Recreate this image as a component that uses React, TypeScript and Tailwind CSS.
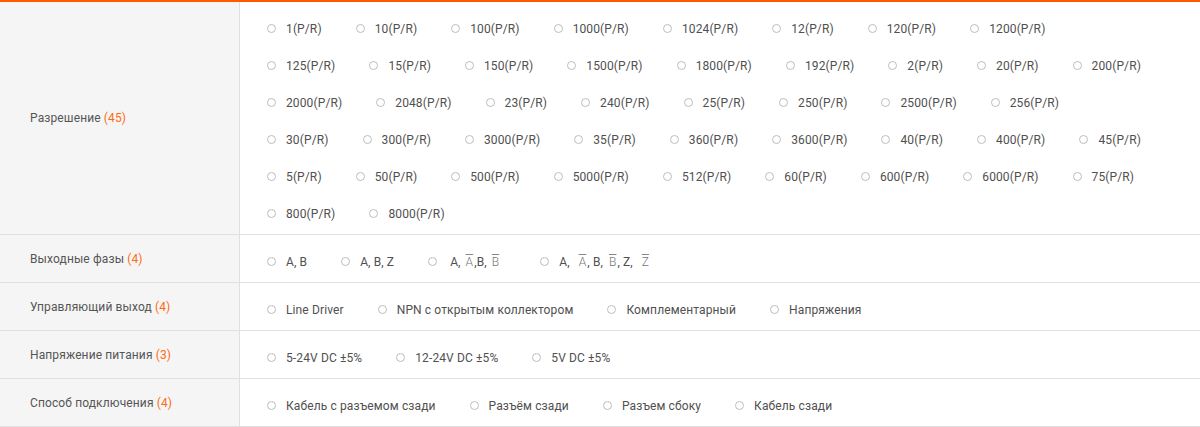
import React from 'react';

// Filter table: resolution / phases / output / power / connection
const resolutionLines: string[][] = [
  ['1', '10', '100', '1000', '1024', '12', '120', '1200'],
  ['125', '15', '150', '1500', '1800', '192', '2', '20', '200'],
  ['2000', '2048', '23', '240', '25', '250', '2500', '256'],
  ['30', '300', '3000', '35', '360', '3600', '40', '400', '45'],
  ['5', '50', '500', '5000', '512', '60', '600', '6000', '75'],
  ['800', '8000'],
];

function Bar({ children, className = '' }: { children: React.ReactNode; className?: string }) {
  return (
    <span className={`inline-block px-[1px] overline decoration-[#888] font-light text-[#777] ${className}`}>
      {children}
    </span>
  );
}

function Option({ children }: { children: React.ReactNode }) {
  return (
    <label className="flex items-center mr-[34px] cursor-pointer whitespace-nowrap">
      <span className="w-[9px] h-[9px] rounded-full border border-[#bdbdbd] bg-white mr-[10px] shrink-0" />
      <span className="text-[12px] text-[#505050]">{children}</span>
    </label>
  );
}

function Label({ title, count }: { title: string; count: number }) {
  return (
    <div className="w-[240px] shrink-0 bg-[#f5f5f5] border-r border-[#e0e0e0] pl-[30px] flex items-center text-[12px] text-[#555]">
      <span>
        {title} <span className="text-[#ff6a13]">({count})</span>
      </span>
    </div>
  );
}

function Row({
  title,
  count,
  options,
}: {
  title: string;
  count: number;
  options: React.ReactNode[];
}) {
  return (
    <div className="flex h-[48px] border-b border-[#e0e0e0]">
      <Label title={title} count={count} />
      <div className="flex-1 flex items-center pl-[27px] pt-[6px]">
        {options.map((o, i) => (
          <Option key={i}>{o}</Option>
        ))}
      </div>
    </div>
  );
}

export default function App() {
  return (
    <div
      className="w-[1200px] bg-white border-t-2 border-[#ff5a00] tracking-[0.12px]"
      style={{ fontFamily: 'Roboto, "Liberation Sans", sans-serif' }}
    >
      {/* Resolution */}
      <div className="flex border-b border-[#e0e0e0]">
        <Label title="Разрешение" count={45} />
        <div className="flex-1 flex flex-col pl-[27px] pt-[8px] pb-[2px]">
          {resolutionLines.map((line, i) => (
            <div key={i} className="flex items-center h-[37px]">
              {line.map((v) => (
                <Option key={v}>{v}(P/R)</Option>
              ))}
            </div>
          ))}
        </div>
      </div>

      <Row
        title="Выходные фазы"
        count={4}
        options={[
          'A, B',
          'A, B, Z',
          <span className="flex items-center">
            <span className="ml-[3px]">A,</span>
            <Bar className="ml-[4px]">A</Bar>
            <span>,B,</span>
            <Bar className="ml-[4px]">B</Bar>
            <span className="w-[6px]" />
          </span>,
          <span className="flex items-center">
            <span>A,</span>
            <Bar className="ml-[8px]">A</Bar>
            <span className="whitespace-pre">, B,</span>
            <Bar className="ml-[5px]">B</Bar>
            <span className="whitespace-pre">, Z,</span>
            <Bar className="ml-[8px]">Z</Bar>
          </span>,
        ]}
      />
      <Row
        title="Управляющий выход"
        count={4}
        options={['Line Driver', 'NPN с открытым коллектором', 'Комплементарный', 'Напряжения']}
      />
      <Row
        title="Напряжение питания"
        count={3}
        options={['5-24V DC ±5%', '12-24V DC ±5%', '5V DC ±5%']}
      />
      <Row
        title="Способ подключения"
        count={4}
        options={['Кабель с разъемом сзади', 'Разъём сзади', 'Разъем сбоку', 'Кабель сзади']}
      />
    </div>
  );
}
